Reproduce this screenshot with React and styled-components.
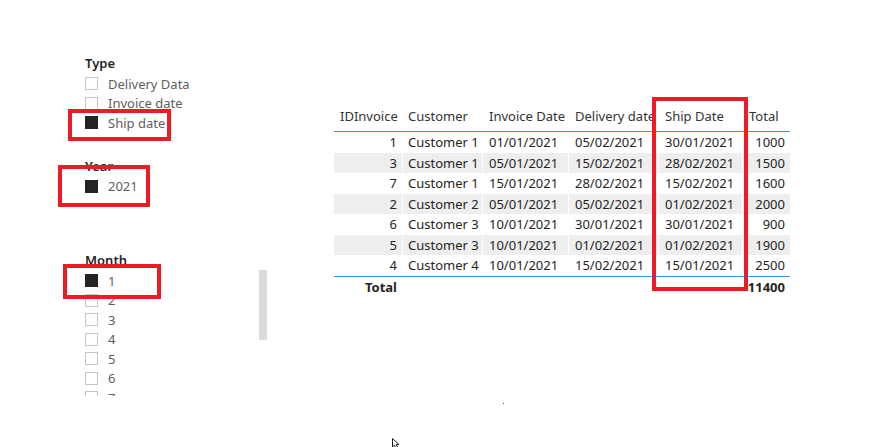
import React from "react";
import styled, { createGlobalStyle } from "styled-components";

const FONT = `"Segoe UI", "Noto Sans", "Open Sans", sans-serif`;

const Global = createGlobalStyle`
  html, body { margin: 0; padding: 0; background: #ffffff; }
  #root { width: 877px; height: 447px; }
`;

const Page = styled.div`
  position: relative;
  width: 877px;
  height: 447px;
  overflow: hidden;
  background: #ffffff;
  display: flex;
  font-family: ${FONT};
  color: #252423;
`;

const LeftPanel = styled.div`
  width: 334px;
  flex: none;
  box-sizing: border-box;
  padding-left: 85px;
  display: flex;
  flex-direction: column;
`;

const Slicer = styled.div`
  margin-top: ${(p) => p.$top}px;
  display: flex;
  flex-direction: row;
`;

const SlicerBody = styled.div`
  width: 174px;
  display: flex;
  flex-direction: column;
`;

const SlicerTitle = styled.div`
  font-size: 13px;
  font-weight: 600;
  line-height: 18px;
  height: 18px;
  margin-bottom: 2px;
  color: #252423;
`;

const ItemList = styled.div`
  display: flex;
  flex-direction: column;
  height: ${(p) => (p.$clip ? `${p.$clip}px` : "auto")};
  overflow: hidden;
`;

const Item = styled.div`
  height: 19.5px;
  flex: none;
  display: flex;
  align-items: center;
  gap: 10px;
`;

const Box = styled.span`
  width: 13px;
  height: 13px;
  box-sizing: border-box;
  flex: none;
  border: 1px solid ${(p) => (p.$on ? "#252423" : "#c8c6c4")};
  background: ${(p) => (p.$on ? "#252423" : "#ffffff")};
`;

const Label = styled.span`
  font-size: 13px;
  color: #605e5c;
  white-space: nowrap;
`;

const ScrollThumb = styled.div`
  width: 8px;
  height: 70px;
  margin-top: 19px;
  background: #dcdbda;
`;

const TableArea = styled.div`
  padding-top: 103px;
`;

const COLS = "68px 80px 86px 90px 84px 48px";

const Row = styled.div`
  display: grid;
  grid-template-columns: ${COLS};
  height: ${(p) => p.$h}px;
  background: ${(p) => (p.$stripe ? "#eeeeee" : "transparent")};
  border-bottom: ${(p) => (p.$line ? "1px solid #3c93e0" : "none")};
  align-items: ${(p) => (p.$head ? "end" : "center")};
  font-size: 13px;
  font-weight: ${(p) => (p.$bold ? 700 : 400)};
`;

const Cell = styled.div`
  box-sizing: border-box;
  white-space: nowrap;
  overflow: hidden;
  text-align: ${(p) => (p.$right ? "right" : "left")};
  padding-left: ${(p) => (p.$right ? 0 : p.$pad ?? 6)}px;
  padding-right: ${(p) => (p.$right ? 5 : 0)}px;
  padding-bottom: ${(p) => (p.$head ? 5 : 0)}px;
  border-left: ${(p) => (p.$sep ? "1px solid #ffffff" : "none")};
  line-height: 20px;
  color: ${(p) => (p.$head ? "#333333" : "#252423")};
`;

const Mark = styled.div`
  position: absolute;
  left: ${(p) => p.$x}px;
  top: ${(p) => p.$y}px;
  width: ${(p) => p.$w}px;
  height: ${(p) => p.$h}px;
  box-sizing: border-box;
  border: 4px solid #ed1c24;
  pointer-events: none;
`;

const Dot = styled.div`
  position: absolute;
  left: 503px;
  top: 403px;
  width: 1px;
  height: 1px;
  background: #444;
`;

const Cursor = styled.svg`
  position: absolute;
  left: 391px;
  top: 438px;
`;

const slicers = [
  { title: "Type", top: 54, items: [["Delivery Data", false], ["Invoice date", false], ["Ship date", true]] },
  { title: "Year", top: 24, items: [["2021", true]] },
  {
    title: "Month",
    top: 55,
    clip: 125,
    scroll: true,
    items: [["1", true], ["2", false], ["3", false], ["4", false], ["5", false], ["6", false], ["7", false]],
  },
];

const headers = ["IDInvoice", "Customer", "Invoice Date", "Delivery date", "Ship Date", "Total"];
const pads = [6, 5, 6, 6, 6, 6];

const rows = [
  ["1", "Customer 1", "01/01/2021", "05/02/2021", "30/01/2021", "1000"],
  ["3", "Customer 1", "05/01/2021", "15/02/2021", "28/02/2021", "1500"],
  ["7", "Customer 1", "15/01/2021", "28/02/2021", "15/02/2021", "1600"],
  ["2", "Customer 2", "05/01/2021", "05/02/2021", "01/02/2021", "2000"],
  ["6", "Customer 3", "10/01/2021", "30/01/2021", "30/01/2021", "900"],
  ["5", "Customer 3", "10/01/2021", "01/02/2021", "01/02/2021", "1900"],
  ["4", "Customer 4", "10/01/2021", "15/02/2021", "15/01/2021", "2500"],
];

const numeric = [true, false, false, false, false, true];

export default function App() {
  return (
    <Page>
      <Global />
      <LeftPanel>
        {slicers.map((s) => (
          <Slicer key={s.title} $top={s.top}>
            <SlicerBody>
              <SlicerTitle>{s.title}</SlicerTitle>
              <ItemList $clip={s.clip}>
                {s.items.map(([label, on]) => (
                  <Item key={label}>
                    <Box $on={on} />
                    <Label>{label}</Label>
                  </Item>
                ))}
              </ItemList>
            </SlicerBody>
            {s.scroll && <ScrollThumb />}
          </Slicer>
        ))}
      </LeftPanel>

      <TableArea>
        <Row $h={28} $line $head>
          {headers.map((h, i) => (
            <Cell key={h} $head $pad={pads[i]} $sep={i > 0}>
              {h}
            </Cell>
          ))}
        </Row>
        {rows.map((r, ri) => (
          <Row key={ri} $h={20.5} $stripe={ri % 2 === 1} $line={ri === rows.length - 1}>
            {r.map((v, ci) => (
              <Cell key={ci} $right={numeric[ci]} $pad={pads[ci]} $sep={ci > 0}>
                {v}
              </Cell>
            ))}
          </Row>
        ))}
        <Row $h={20} $bold>
          <Cell $right>Total</Cell>
          <Cell />
          <Cell />
          <Cell />
          <Cell />
          <Cell $right>11400</Cell>
        </Row>
      </TableArea>

      <Mark $x={68} $y={109} $w={103} $h={32} />
      <Mark $x={58} $y={165} $w={92} $h={42} />
      <Mark $x={63} $y={264} $w={98} $h={35} />
      <Mark $x={652} $y={97} $w={96} $h={194} />

      <Dot />
      <Cursor width="12" height="12" viewBox="0 0 12 12">
        <path d="M1.5 0.5 L1.5 9 L3.5 7.2 L5.5 10.8 L7 10 L5.2 6.6 L8 6.6 Z" fill="#ffffff" stroke="#222" strokeWidth="1" />
      </Cursor>
    </Page>
  );
}
